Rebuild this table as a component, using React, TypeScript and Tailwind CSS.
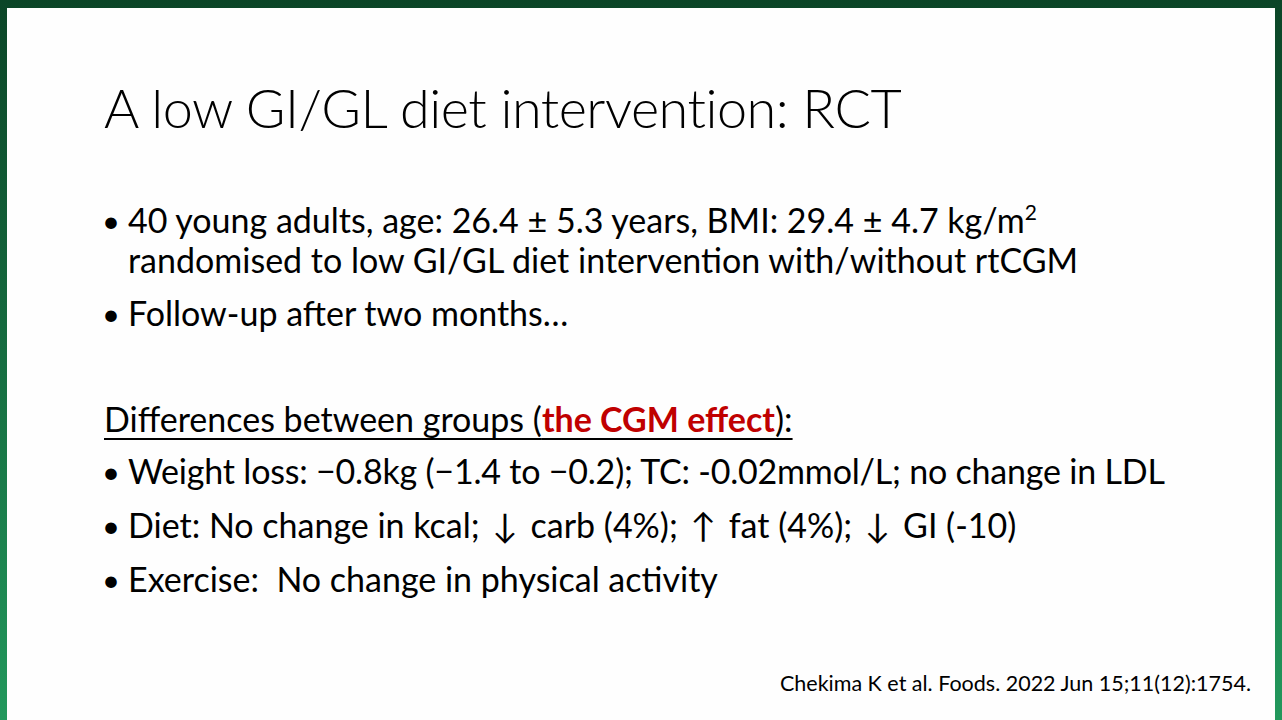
import React from "react";

const body = { fontFamily: "Lato, 'Open Sans', sans-serif" };

function Bullet({ children, className = "" }: { children: React.ReactNode; className?: string }) {
  return (
    <li className={`flex items-start ${className}`}>
      <span className="w-[24px] shrink-0 -ml-[2px] mr-[2px] text-[31px]">•</span>
      <span>{children}</span>
    </li>
  );
}

function Arrow({ ch }: { ch: string }) {
  return <span className="inline-block mx-[4px]">{ch}</span>;
}

export default function App() {
  return (
    <div className="w-[1282px] h-[720px] bg-gradient-to-b from-[#0b4527] to-[#22985c] pt-[8px] px-[7px] flex">
      <div className="flex-1 bg-[#fefefe] flex flex-col pl-[97px] pr-[24px] text-black" style={body}>
        <h1 className="mt-[70px] text-[54px] font-light leading-[60px] tracking-[-0.5px]">
          A low GI/GL diet intervention: RCT
        </h1>

        <ul className="mt-[62px] text-[34px] leading-[40px]">
          <Bullet>
            40 young adults, age: 26.4 ± 5.3 years, BMI: 29.4 ± 4.7 kg/m<sup className="text-[21px] relative -top-[13px]">2</sup>
            <br />
            randomised to low GI/GL diet intervention with/without rtCGM
          </Bullet>
          <Bullet className="mt-[13px]">Follow-up after two months…</Bullet>
        </ul>

        <div className="mt-[66px] text-[34px] leading-[40px] underline underline-offset-[6px] decoration-[2px]">
          Differences between groups (<span className="text-[#c00000] font-bold">the CGM effect</span>):
        </div>

        <ul className="mt-[12px] text-[34px] leading-[40px] flex flex-col gap-[14px]">
          <Bullet>
            <span className="tracking-[-0.2px]">Weight loss: −0.8kg (−1.4 to −0.2); TC: -0.02mmol/L; no change in LDL</span>
          </Bullet>
          <Bullet>
            Diet: No change in kcal; <Arrow ch="↓" /> carb (4%); <Arrow ch="↑" /> fat (4%); <Arrow ch="↓" /> GI (-10)
          </Bullet>
          <Bullet>Exercise:&nbsp; No change in physical activity</Bullet>
        </ul>

        <div className="mt-auto mb-[24px] self-end text-[21.5px] leading-[26px]">
          Chekima K et al. Foods. 2022 Jun 15;11(12):1754.
        </div>
      </div>
    </div>
  );
}
